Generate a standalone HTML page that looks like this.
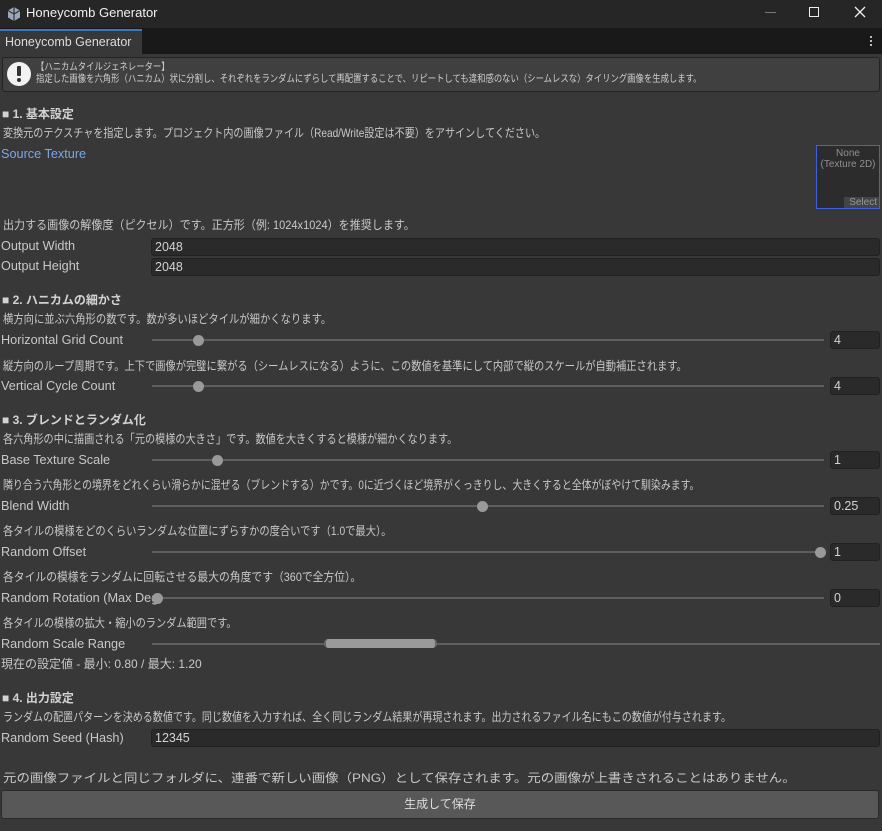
<!DOCTYPE html>
<html><head><meta charset="utf-8"><style>
*{margin:0;padding:0;box-sizing:border-box}
body{width:882px;height:831px;background:#383838;font-family:"Liberation Sans","Noto Sans CJK JP",sans-serif;font-size:12px;color:#c8c8c8;position:relative;overflow:hidden}
.a{position:absolute;white-space:nowrap}
.t{position:absolute;white-space:nowrap;line-height:14px;transform-origin:0 0}
.l{font-size:12.7px}
.h{font-weight:bold;color:#d2d2d2}
.f{position:absolute;background:#2a2a2a;border:1px solid #212121;border-radius:3px;color:#d2d2d2;padding-left:3px;line-height:16px;font-size:12.5px}
.tr{position:absolute;height:2px;background:#5e5e5e}
.th{position:absolute;width:11px;height:11px;border-radius:50%;background:#999}
</style></head><body>
<div class="a" style="left:0;top:0;width:882px;height:28px;background:#262626"></div>
<svg class="a" style="left:6px;top:6px" width="16" height="16" viewBox="0 0 16 16"><path d="M8 1 L14 4.5 V11.5 L8 15 L2 11.5 V4.5Z" fill="#9aa7b8"/><path d="M8 1V8M2 4.5L8 8L14 4.5M8 8V15" stroke="#333" stroke-width="1.2" fill="none"/></svg>
<div class="t" style="left:26px;top:6px;color:#f0f0f0;font-size:13px">Honeycomb Generator</div>
<div class="a" style="left:765px;top:12px;width:11px;height:1px;background:#777"></div>
<div class="a" style="left:809px;top:7px;width:10px;height:10px;border:1.3px solid #eee"></div>
<svg class="a" style="left:854px;top:6px" width="12" height="12"><path d="M1 1L11 11M11 1L1 11" stroke="#eee" stroke-width="1.3"/></svg>
<div class="a" style="left:0;top:28px;width:882px;height:26px;background:#191919"></div>
<div class="a" style="left:0;top:29px;width:142px;height:25px;background:#383838;border-top:2px solid #3a79bb"></div>
<div class="t" style="left:5px;top:35px;color:#dcdcdc;font-size:12.5px">Honeycomb Generator</div>
<div class="a" style="left:870px;top:36px;width:2px;height:2px;background:#bbb;box-shadow:0 4px #bbb,0 8px #bbb"></div>
<div class="a" style="left:2px;top:57px;width:878px;height:35px;background:#404040;border:1px solid #232323;border-radius:3px"></div>
<div class="a" style="left:7px;top:62px;width:24px;height:24px;border-radius:50%;background:#f2f2f2"></div>
<div class="a" style="left:17px;top:66px;width:4px;height:10px;background:#333;border-radius:1px"></div>
<div class="a" style="left:17px;top:78px;width:4px;height:4px;background:#333;border-radius:50%"></div>
<div class="t" style="left:36px;top:62px;font-size:10px;line-height:12px;color:#cfcfcf;transform:scaleX(.835)">【ハニカムタイルジェネレーター】<br>指定した画像を六角形（ハニカム）状に分割し、それぞれをランダムにずらして再配置することで、リピートしても違和感のない（シームレスな）タイリング画像を生成します。</div>

<div class="t h" style="left:2px;top:107px">■ 1. 基本設定</div>
<div class="t" style="left:3px;top:126px;transform:scaleX(.84)">変換元のテクスチャを指定します。プロジェクト内の画像ファイル（Read/Write設定は不要）をアサインしてください。</div>
<div class="t l" style="left:1px;top:147px;color:#7ba6ea">Source Texture</div>
<div class="a" style="left:816px;top:145px;width:64px;height:64px;background:#2c2c2c;border:1px solid #3d5fe0"></div>
<div class="t" style="left:817px;top:148px;width:62px;text-align:center;font-size:10px;line-height:11px;color:#909090;white-space:normal">None<br>(Texture 2D)</div>
<div class="a" style="left:844px;top:197px;width:35px;height:11px;background:#444;color:#999;font-size:10px;line-height:11px;text-align:right;padding-right:2px">Select</div>
<div class="t" style="left:3px;top:218px;transform:scaleX(.92)">出力する画像の解像度（ピクセル）です。正方形（例: 1024x1024）を推奨します。</div>
<div class="t l" style="left:1px;top:239px">Output Width</div>
<div class="f" style="left:151px;top:238px;width:729px;height:18px">2048</div>
<div class="t l" style="left:1px;top:259px">Output Height</div>
<div class="f" style="left:151px;top:258px;width:729px;height:18px">2048</div>

<div class="t h" style="left:2px;top:293px">■ 2. ハニカムの細かさ</div>
<div class="t" style="left:3px;top:312px;transform:scaleX(.86)">横方向に並ぶ六角形の数です。数が多いほどタイルが細かくなります。</div>
<div class="t l" style="left:1px;top:333px">Horizontal Grid Count</div>
<div class="tr" style="left:152px;top:339px;width:672px"></div><div class="th" style="left:193px;top:335px"></div>
<div class="f" style="left:830px;top:331px;width:50px;height:18px">4</div>
<div class="t" style="left:3px;top:359px;transform:scaleX(.855)">縦方向のループ周期です。上下で画像が完璧に繋がる（シームレスになる）ように、この数値を基準にして内部で縦のスケールが自動補正されます。</div>
<div class="t l" style="left:1px;top:379px">Vertical Cycle Count</div>
<div class="tr" style="left:152px;top:385px;width:672px"></div><div class="th" style="left:193px;top:381px"></div>
<div class="f" style="left:830px;top:377px;width:50px;height:18px">4</div>

<div class="t h" style="left:2px;top:413px">■ 3. ブレンドとランダム化</div>
<div class="t" style="left:3px;top:432px;transform:scaleX(.845)">各六角形の中に描画される「元の模様の大きさ」です。数値を大きくすると模様が細かくなります。</div>
<div class="t l" style="left:1px;top:453px">Base Texture Scale</div>
<div class="tr" style="left:152px;top:459px;width:672px"></div><div class="th" style="left:212px;top:455px"></div>
<div class="f" style="left:830px;top:451px;width:50px;height:18px">1</div>
<div class="t" style="left:3px;top:478px;transform:scaleX(.825)">隣り合う六角形との境界をどれくらい滑らかに混ぜる（ブレンドする）かです。0に近づくほど境界がくっきりし、大きくすると全体がぼやけて馴染みます。</div>
<div class="t l" style="left:1px;top:499px">Blend Width</div>
<div class="tr" style="left:152px;top:505px;width:672px"></div><div class="th" style="left:477px;top:501px"></div>
<div class="f" style="left:830px;top:497px;width:50px;height:18px">0.25</div>
<div class="t" style="left:3px;top:524px;transform:scaleX(.855)">各タイルの模様をどのくらいランダムな位置にずらすかの度合いです（1.0で最大）。</div>
<div class="t l" style="left:1px;top:545px">Random Offset</div>
<div class="tr" style="left:152px;top:551px;width:672px"></div><div class="th" style="left:815px;top:547px"></div>
<div class="f" style="left:830px;top:543px;width:50px;height:18px">1</div>
<div class="t" style="left:3px;top:570px;transform:scaleX(.9)">各タイルの模様をランダムに回転させる最大の角度です（360で全方位）。</div>
<div class="t l" style="left:1px;top:591px;width:156px;overflow:hidden">Random Rotation (Max Deg</div>
<div class="tr" style="left:152px;top:597px;width:672px"></div><div class="th" style="left:152px;top:593px"></div>
<div class="f" style="left:830px;top:589px;width:50px;height:18px">0</div>
<div class="t" style="left:3px;top:616px;transform:scaleX(.85)">各タイルの模様の拡大・縮小のランダム範囲です。</div>
<div class="t l" style="left:1px;top:637px">Random Scale Range</div>
<div class="tr" style="left:152px;top:643px;width:728px"></div>
<div class="a" style="left:324px;top:639px;width:113px;height:9px;background:#9a9a9a;border-radius:4px;border-left:2px solid #666;border-right:2px solid #666"></div>
<div class="t" style="left:1px;top:657px">現在の設定値 - 最小: 0.80 / 最大: 1.20</div>

<div class="t h" style="left:2px;top:691px">■ 4. 出力設定</div>
<div class="t" style="left:3px;top:710px;transform:scaleX(.835)">ランダムの配置パターンを決める数値です。同じ数値を入力すれば、全く同じランダム結果が再現されます。出力されるファイル名にもこの数値が付与されます。</div>
<div class="t l" style="left:1px;top:731px">Random Seed (Hash)</div>
<div class="f" style="left:151px;top:729px;width:729px;height:18px">12345</div>
<div class="t" style="left:3px;top:771px;transform:scaleX(1.12)">元の画像ファイルと同じフォルダに、連番で新しい画像（PNG）として保存されます。元の画像が上書きされることはありません。</div>
<div class="a" style="left:1px;top:790px;width:878px;height:29px;background:#585858;border:1px solid #2a2a2a;border-radius:3px;text-align:center;line-height:27px;color:#dedede">生成して保存</div>
</body></html>
